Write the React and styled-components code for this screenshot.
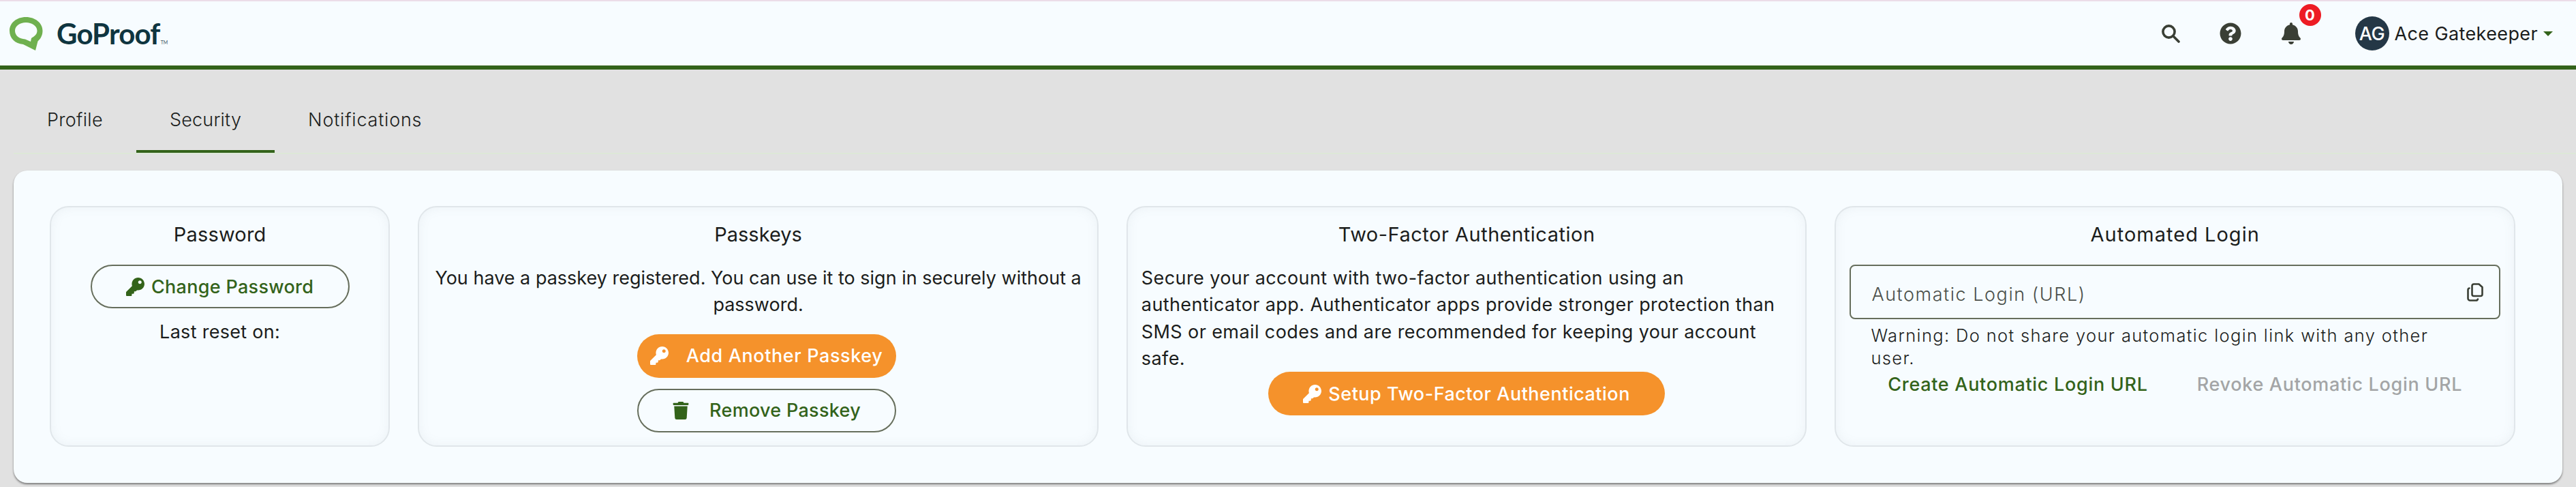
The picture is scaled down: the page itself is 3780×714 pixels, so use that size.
import React from "react";
import styled, { createGlobalStyle } from "styled-components";
import { FaKey, FaTrash, FaBell, FaQuestionCircle } from "react-icons/fa";

const Global = createGlobalStyle`
  html, body { margin: 0; padding: 0; background: #e1e1e1; }
  * { box-sizing: border-box; }
  body { font-family: Inter, "Liberation Sans", sans-serif; color: #1b1d1c; }
`;

const Page = styled.div`
  width: 3780px;
  height: 714px;
  overflow: hidden;
  background: #e1e1e1;
`;

const Header = styled.header`
  height: 102px;
  background: #f7fcff;
  border-top: 2px solid #ecdde8;
  border-bottom: 6px solid #33631a;
  display: flex;
  align-items: center;
  padding: 0 34px 0 14px;
`;

const Logo = styled.div`
  display: flex;
  align-items: flex-start;
  gap: 20px;
  margin-right: auto;
  height: 50px;
  margin-top: 2px;
`;

const LogoMark = styled.svg`
  width: 49px;
  height: 49px;
  display: block;
`;

const LogoText = styled.span`
  font-family: Lato, sans-serif;
  font-size: 42px;
  font-weight: 700;
  letter-spacing: -0.8px;
  line-height: 48px;
  color: #0f3540;
`;

const Tm = styled.sup`
  font-size: 7px;
  font-weight: 400;
  letter-spacing: 0;
  color: #44606a;
  vertical-align: baseline;
  margin-left: 1px;
`;

const HeaderIcons = styled.div`
  display: flex;
  align-items: center;
  color: #3a3f35;
`;

const IconSlot = styled.div`
  position: relative;
  display: flex;
  margin-left: ${(p) => p.$gap}px;
`;

const Badge = styled.span`
  position: absolute;
  left: 28px;
  top: -27px;
  width: 32px;
  height: 32px;
  border-radius: 50%;
  background: #ed1c24;
  color: #fff;
  font-size: 22px;
  font-weight: 700;
  display: flex;
  align-items: center;
  justify-content: center;
`;

const UserMenu = styled.div`
  display: flex;
  align-items: center;
  margin-left: 78px;
`;

const Avatar = styled.div`
  width: 50px;
  height: 50px;
  border-radius: 50%;
  background: #243746;
  color: #fff;
  font-size: 27px;
  font-weight: 500;
  letter-spacing: -0.5px;
  display: flex;
  align-items: center;
  justify-content: center;
`;

const UserName = styled.span`
  font-size: 27px;
  font-weight: 400;
  letter-spacing: 0.38px;
  margin-left: 8px;
`;

const Caret = styled.span`
  width: 0;
  height: 0;
  margin-left: 8px;
  border-left: 7px solid transparent;
  border-right: 7px solid transparent;
  border-top: 7px solid #33631a;
`;

const Tabs = styled.nav`
  display: flex;
  margin: 46px 0 0 20px;
  height: 78px;
  border-bottom: 2px solid #dde8d8;
`;

const Tab = styled.div`
  height: 76px;
  padding: 0 49px;
  display: flex;
  align-items: flex-start;
  padding-top: 8px;
  line-height: 40px;
  font-size: 27px;
  letter-spacing: ${(p) => p.$spacing}px;
  font-weight: 300;
  color: #1b1d1c;
  border-bottom: 4px solid ${(p) => (p.$active ? "#33631a" : "transparent")};
  margin-bottom: -2px;
`;

const Panel = styled.main`
  margin: 24px 20px 0;
  height: 458px;
  background: #f7fcff;
  border-radius: 20px;
  box-shadow: 0 2px 3px rgba(0, 0, 0, 0.45);
  padding: 52px 69px 0 53px;
  display: grid;
  grid-template-columns: 1fr 2fr 2fr 2fr;
  column-gap: 41px;
  align-items: start;
`;

const Card = styled.section`
  height: 353px;
  border: 2px solid #e0e6ea;
  border-radius: 28px;
  box-shadow: inset 0 0 16px rgba(120, 135, 145, 0.09);
  padding: 20px 20px 0;
  display: flex;
  flex-direction: column;
  min-width: 0;
`;

const Title = styled.h2`
  margin: 0 0 24px;
  font-size: 29px;
  line-height: 40px;
  font-weight: 400;
  text-align: center;
  letter-spacing: ${(p) => p.$spacing || 0}px;
`;

const Body = styled.p`
  margin: 0;
  font-size: 27px;
  line-height: 39.3px;
  font-weight: 400;
  letter-spacing: ${(p) => p.$spacing || 0}px;
  text-align: ${(p) => p.$align || "left"};
`;

const Stack = styled.div`
  display: flex;
  flex-direction: column;
  gap: 16px;
  align-items: center;
  padding-left: ${(p) => p.$shift || 0}px;
  margin-top: ${(p) => p.$top || 0}px;
`;

const Pill = styled.button`
  width: ${(p) => p.$width}px;
  height: 64px;
  border-radius: 32px;
  border: ${(p) => (p.$solid ? "none" : "2px solid #666e5c")};
  background: ${(p) => (p.$solid ? "#f5922b" : "transparent")};
  color: ${(p) => (p.$solid ? "#ffffff" : "#33631a")};
  font-family: inherit;
  font-size: 27px;
  font-weight: 500;
  letter-spacing: ${(p) => p.$spacing || 0}px;
  display: flex;
  align-items: center;
  justify-content: center;
  gap: ${(p) => p.$gap}px;
  padding: 0;
  svg { flex: none; }
`;

const Centered = styled.p`
  margin: 15px 0 0;
  font-size: 27px;
  line-height: 40px;
  letter-spacing: 0.3px;
  text-align: center;
`;

const InputBox = styled.div`
  height: 80px;
  border: 2px solid #666e5c;
  border-radius: 8px;
  display: flex;
  align-items: center;
  justify-content: space-between;
  padding: 0 23px 0 30px;
  color: #3a3f35;
`;

const Placeholder = styled.span`
  font-size: 27px;
  font-weight: 300;
  letter-spacing: 1.55px;
  color: #4a4f4a;
  padding-top: 7px;
`;

const CopyGlyph = styled.svg`
  width: 24px;
  height: 27px;
  display: block;
`;

const Warning = styled.p`
  margin: 7px 0 0;
  padding: 0 70px 0 31px;
  font-size: 25.5px;
  line-height: 33px;
  font-weight: 300;
  letter-spacing: 1.35px;
`;

const LinkRow = styled.div`
  display: flex;
  justify-content: center;
  gap: 72px;
  margin-top: 3px;
`;

const TextLink = styled.span`
  font-size: 27px;
  line-height: 40px;
  font-weight: 500;
  letter-spacing: 0.7px;
  white-space: nowrap;
  color: ${(p) => (p.$muted ? "#a3a5a6" : "#33631a")};
`;

export default function App() {
  return (
    <Page>
      <Global />
      <Header>
        <Logo>
          <LogoMark viewBox="0 0 49 49">
            <path
              fill="#6fb04f"
              fillRule="evenodd"
              d="M24 0C38 0 48.5 9 48.5 20C48.5 27 45.5 32 41.5 35.5L38 49L20 40C8 39 0 31 0 20C0 9 10 0 24 0ZM24 8C15 8 8 13 8 20C8 27 14 32 23 32.5L31 36L32 31C37 28 40.5 25 40.5 20C40.5 13 33 8 24 8Z"
            />
          </LogoMark>
          <LogoText>
            GoProof<Tm>TM</Tm>
          </LogoText>
        </Logo>
        <HeaderIcons>
          <IconSlot $gap={0}>
            <svg width="27" height="27" viewBox="0 0 27 27" fill="none" stroke="#3a3f35" strokeWidth="3.6" strokeLinecap="round">
              <circle cx="10.5" cy="10.5" r="8.6" />
              <path d="M17 17L25 25" />
            </svg>
          </IconSlot>
          <IconSlot $gap={58}>
            <FaQuestionCircle size={32} />
          </IconSlot>
          <IconSlot $gap={57}>
            <FaBell size={32} />
            <Badge>0</Badge>
          </IconSlot>
        </HeaderIcons>
        <UserMenu>
          <Avatar>AG</Avatar>
          <UserName>Ace Gatekeeper</UserName>
          <Caret />
        </UserMenu>
      </Header>

      <Tabs>
        <Tab $spacing={0.3}>Profile</Tab>
        <Tab $active $spacing={0.2}>Security</Tab>
        <Tab $spacing={0.8}>Notifications</Tab>
      </Tabs>

      <Panel>
        <Card>
          <Title $spacing={0.2}>Password</Title>
          <Stack>
            <Pill $width={380} $gap={10} $spacing={0.3}>
              <FaKey size={27} />
              Change Password
            </Pill>
          </Stack>
          <Centered>Last reset on:</Centered>
        </Card>

        <Card>
          <Title>Passkeys</Title>
          <Body $align="center" $spacing={0}>
            You have a passkey registered. You can use it to sign in securely without a password.
          </Body>
          <Stack $shift={24} $top={23}>
            <Pill $solid $width={380} $gap={26} $spacing={0.6}>
              <FaKey size={27} />
              Add Another Passkey
            </Pill>
            <Pill $width={380} $gap={29} $spacing={0.3}>
              <FaTrash size={26} />
              Remove Passkey
            </Pill>
          </Stack>
        </Card>

        <Card>
          <Title $spacing={0.5}>Two-Factor Authentication</Title>
          <Body $spacing={0.4}>
            Secure your account with two-factor authentication using an authenticator app. Authenticator apps provide stronger protection than SMS or email codes and are recommended for keeping your account safe.
          </Body>
          <Stack>
            <Pill $solid $width={582} $gap={10} $spacing={0.5}>
              <FaKey size={27} />
              Setup Two-Factor Authentication
            </Pill>
          </Stack>
        </Card>

        <Card>
          <Title $spacing={1}>Automated Login</Title>
          <InputBox>
            <Placeholder>Automatic Login (URL)</Placeholder>
            <CopyGlyph viewBox="0 0 24 27" fill="none" stroke="#3a3f35" strokeWidth="2.6" strokeLinecap="round" strokeLinejoin="round">
              <path d="M10 1.5H17.5L22.5 6V16.5A2.5 2.5 0 0 1 20 19H10A2.5 2.5 0 0 1 7.5 16.5V4A2.5 2.5 0 0 1 10 1.5Z" />
              <path d="M3.5 7.5A2.5 2.5 0 0 0 1.5 10V22.5A3 3 0 0 0 4.5 25.5H13A3 3 0 0 0 16 23.5" />
            </CopyGlyph>
          </InputBox>
          <Warning>Warning: Do not share your automatic login link with any other user.</Warning>
          <LinkRow>
            <TextLink>Create Automatic Login URL</TextLink>
            <TextLink $muted>Revoke Automatic Login URL</TextLink>
          </LinkRow>
        </Card>
      </Panel>
    </Page>
  );
}
